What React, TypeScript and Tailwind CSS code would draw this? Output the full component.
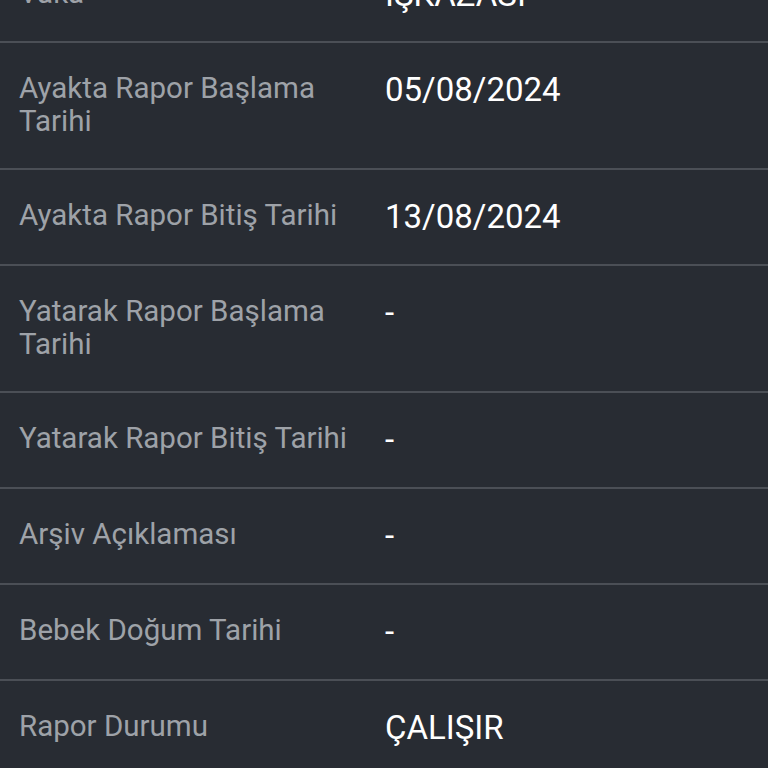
const ROWS: { label: string; value: string }[] = [
  { label: 'Vaka', value: 'İŞKAZASI' },
  { label: 'Ayakta Rapor Başlama Tarihi', value: '05/08/2024' },
  { label: 'Ayakta Rapor Bitiş Tarihi', value: '13/08/2024' },
  { label: 'Yatarak Rapor Başlama Tarihi', value: '-' },
  { label: 'Yatarak Rapor Bitiş Tarihi', value: '-' },
  { label: 'Arşiv Açıklaması', value: '-' },
  { label: 'Bebek Doğum Tarihi', value: '-' },
  { label: 'Rapor Durumu', value: 'ÇALIŞIR' },
];

export default function App() {
  return (
    <div className="h-[768px] overflow-hidden bg-[#282c33] font-['Roboto',sans-serif]">
      <div className="-mt-[52.5px]">
        {ROWS.map((row, i) => (
          <div
            key={row.label}
            className={`grid grid-cols-2 pt-[29px] pb-[29.9px] ${i < ROWS.length - 1 ? 'border-b-2 border-[#4b4f56]' : ''}`}
          >
            <div className="pl-[19px] pr-4 text-[29.5px] leading-[33px] text-[#9ea2a8]">{row.label}</div>
            <div className="pl-[1px] text-[33px] leading-[35px] text-white">{row.value}</div>
          </div>
        ))}
      </div>
    </div>
  );
}
